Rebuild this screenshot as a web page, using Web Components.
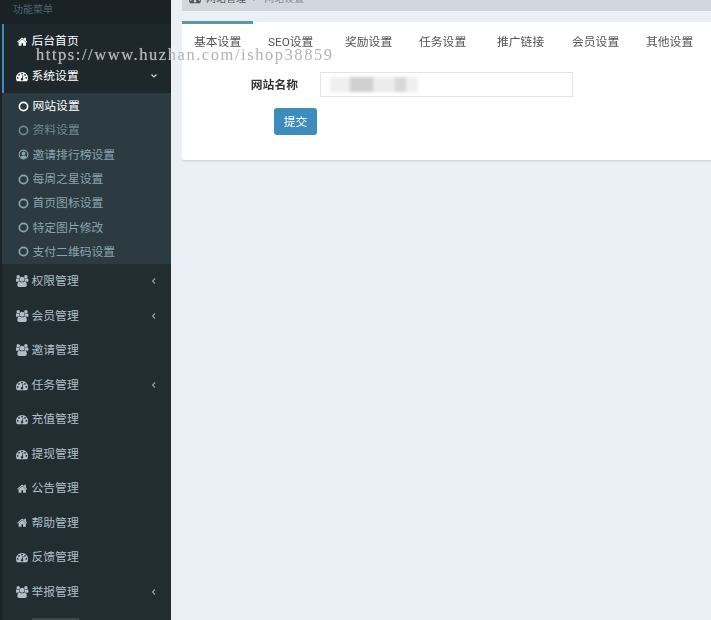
<!DOCTYPE html>
<html lang="zh"><head><meta charset="utf-8"><title>网站设置</title>
<style>
html,body{margin:0;height:620px;overflow:hidden;background:#ebeff6}
body{font:11.8px/16px Roboto,"Noto Sans CJK SC",sans-serif}
</style></head><body>
<x-app>
  <x-sidebar slot="side">
    <x-side-head>功能菜单</x-side-head>
    <x-side-item icon="home" active>后台首页</x-side-item>
    <x-side-item icon="gauge" active open chev="down">系统设置</x-side-item>
    <x-sub-menu>
      <x-sub-item on>网站设置</x-sub-item>
      <x-sub-item dim>资料设置</x-sub-item>
      <x-sub-item icon="user">邀请排行榜设置</x-sub-item>
      <x-sub-item>每周之星设置</x-sub-item>
      <x-sub-item>首页图标设置</x-sub-item>
      <x-sub-item>特定图片修改</x-sub-item>
      <x-sub-item>支付二维码设置</x-sub-item>
    </x-sub-menu>
    <x-side-item icon="users" chev="left">权限管理</x-side-item>
    <x-side-item icon="users" chev="left">会员管理</x-side-item>
    <x-side-item icon="users">邀请管理</x-side-item>
    <x-side-item icon="gauge" chev="left">任务管理</x-side-item>
    <x-side-item icon="gauge">充值管理</x-side-item>
    <x-side-item icon="gauge">提现管理</x-side-item>
    <x-side-item icon="home">公告管理</x-side-item>
    <x-side-item icon="home">帮助管理</x-side-item>
    <x-side-item icon="gauge">反馈管理</x-side-item>
    <x-side-item icon="users" chev="left">举报管理</x-side-item>
    <x-side-item icon="users" chev="left"></x-side-item>
  </x-sidebar>
  <x-crumb slot="main"></x-crumb>
  <x-card slot="main">
    <x-tabs></x-tabs>
    <x-form-row label="网站名称"></x-form-row>
    <x-button>提交</x-button>
  </x-card>
  <x-watermark slot="over">https://www.huzhan.com/ishop38859</x-watermark>
</x-app>
<script>
const ICONS={
home:['0 0 1664 1792','<path d="M1408 992v480q0 26-19 45t-45 19h-384v-384h-256v384h-384q-26 0-45-19t-19-45v-480q0-1 .5-3t.5-3l575-474 575 474q1 2 1 6zm223-69l-62 74q-8 9-21 11h-3q-13 0-21-7l-692-577-692 577q-12 8-24 7-13-2-21-11l-62-74q-8-10-7-23.500t11-21.500l719-599q32-26 76-26t76 26l244 204v-195q0-14 9-23t23-9h192q14 0 23 9t9 23v408l219 182q10 8 11 21.500t-7 23.500z"/>'],
gauge:['0 0 1792 1792','<path d="M384 1184q0-53-37.500-90.500t-90.500-37.500-90.500 37.500-37.500 90.500 37.500 90.500 90.500 37.500 90.500-37.500 37.500-90.500zm192-448q0-53-37.500-90.500t-90.500-37.500-90.500 37.500-37.500 90.500 37.500 90.500 90.500 37.500 90.500-37.500 37.500-90.500zm428 481l101-382q6-26-7.500-48.500t-38.500-29.500-48 6.500-30 39.500l-101 382q-60 5-107 43.500t-63 98.500q-20 77 20 146t117 89 146-20 89-117q16-60-6-117t-72-91zm660-33q0-53-37.500-90.500t-90.500-37.500-90.500 37.500-37.500 90.500 37.500 90.500 90.500 37.500 90.500-37.500 37.500-90.500zm-640-640q0-53-37.500-90.500t-90.500-37.500-90.500 37.500-37.500 90.500 37.500 90.500 90.500 37.500 90.500-37.500 37.500-90.500zm448 192q0-53-37.500-90.500t-90.500-37.500-90.500 37.500-37.500 90.500 37.500 90.500 90.500 37.500 90.500-37.500 37.500-90.500zm320 448q0 261-141 483-19 29-54 29h-1402q-35 0-54-29-141-221-141-483 0-182 71-348t191-286 286-191 348-71 348 71 286 191 191 286 71 348z"/>'],
users:['0 0 1920 1792','<path d="M529 896q-162 5-265 128h-134q-82 0-138-40.500t-56-118.500q0-353 124-353 6 0 43.500 21t97.500 42.500 119 21.500q67 0 133-23-5 37-5 66 0 139 81 256zm1071 637q0 120-73 189.500t-194 69.500h-874q-121 0-194-69.500t-73-189.500q0-53 3.500-103.500t14-109 26.500-108.500 43-97.500 62-81 85.500-53.500 111.500-20q10 0 43 21.500t73 48 107 48 135 21.500 135-21.500 107-48 73-48 43-21.500q61 0 111.500 20t85.500 53.500 62 81 43 97.500 26.500 108.500 14 109 3.500 103.500zm-1024-1277q0 106-75 181t-181 75-181-75-75-181 75-181 181-75 181 75 75 181zm704 384q0 159-112.500 271.500t-271.500 112.500-271.500-112.500-112.500-271.500 112.500-271.500 271.500-112.500 271.500 112.500 112.500 271.500zm576 225q0 78-56 118.500t-138 40.500h-134q-103-123-265-128 81-117 81-256 0-29-5-66 66 23 133 23 59 0 119-21.500t97.500-42.500 43.500-21q124 0 124 353zm-128-609q0 106-75 181t-181 75-181-75-75-181 75-181 181-75 181 75 75 181z"/>'],
ring:['0 0 12 12','<circle cx="6" cy="6" r="4.5" fill="none" stroke="currentColor" stroke-width="1.800"/>'],
user:['0 0 12 12','<circle cx="6" cy="6" r="4.7" fill="none" stroke="currentColor" stroke-width="1.300"/><circle cx="6" cy="4.800" r="2" fill="currentColor"/><path d="M2.600 9.200c.7-1.700 2-2.200 3.400-2.200s2.700.5 3.400 2.200L6 10.600z" fill="currentColor"/>']
};
const svg=(n,w,h)=>`<svg width="${w}" height="${h}" viewBox="${ICONS[n][0]}" fill="currentColor" aria-hidden="true">${ICONS[n][1]}</svg>`;
function el(name,css,html){
  customElements.define(name,class extends HTMLElement{
    connectedCallback(){
      if(this.shadowRoot)return;
      const r=this.attachShadow({mode:'open'});
      r.innerHTML=`<style>${css}</style>${typeof html==='function'?html(this):html}`;
    }
  });
}
el('x-app',`:host{display:block;position:relative;width:711px;height:620px;overflow:hidden;filter:blur(.45px)}
.l{display:flex;height:620px}
.m{flex:1;min-width:0;padding-left:11px;display:flex;flex-direction:column}`,
`<div class="l"><slot name="side"></slot><div class="m"><slot name="main"></slot></div></div><slot name="over"></slot>`);
el('x-sidebar',`:host{display:block;box-sizing:border-box;width:171px;height:620px;overflow:hidden;background:#222d32;border-left:2px solid #1b2327;color:#b8c7ce}`,`<slot></slot>`);
el('x-side-head',`:host{display:block;height:24px;box-sizing:border-box;padding:2px 0 0 11px;background:#1a2226;color:#4b646f;font-size:10px;line-height:16px}`,`<slot></slot>`);
el('x-side-item',`:host{display:flex;align-items:center;box-sizing:border-box;height:34.5px;padding-left:10px;color:#b0bfc6;border-left:2px solid transparent}
:host([active]){background:#1e282c;color:#fff;border-left-color:#3c8dbc}
.i{width:17px;flex:none;display:flex;justify-content:center;margin-left:0;padding-right:1px;box-sizing:border-box}
.t{flex:1;padding-left:.5px}
.c{width:8px;margin-right:13px;display:flex;justify-content:center;opacity:.8}
.c svg{display:block}
.bar{display:block;width:47px;height:16px;margin-top:-1px;background:rgba(184,199,206,.18)}`,
h=>{
 const n=h.getAttribute('icon'),c=h.getAttribute('chev');
 const dims=n==='users'?[13,12]:n==='gauge'?[12,12]:[10.500,11.500];
 const ch=c==='down'?'<path d="M1.500 2.500l2.500 2.500 2.500-2.500" fill="none" stroke="currentColor" stroke-width="1.100"/>':c==='left'?'<path d="M5 1.500L2.500 4 5 6.500" fill="none" stroke="currentColor" stroke-width="1.100"/>':'';
 const body=h.textContent.trim()?'<slot></slot>':'<span class="bar"></span>';
 return `<span class="i">${svg(n,dims[0],dims[1])}</span><span class="t">${body}</span><span class="c">${ch?`<svg width="8" height="8" viewBox="0 0 8 8">${ch}</svg>`:''}</span>`;
});
el('x-sub-menu',`:host{display:block;background:#2c3b41;padding-top:1px}`,`<slot></slot>`);
el('x-sub-item',`:host{display:flex;align-items:center;gap:4px;height:24.3px;box-sizing:border-box;padding-left:15.500px;color:#8aa4af}
:host([on]){color:#fff}
:host([dim]){color:#6f8791}
svg{flex:none;display:block}`,
h=>`${svg(h.getAttribute('icon')||'ring',11,11)}<slot></slot>`);
el('x-crumb',`:host{display:flex;align-items:flex-end;flex:none;gap:4px;height:11px;box-sizing:border-box;background:#d2d6de;padding:0 0 4.500px 7px;color:#555;overflow:hidden;font-size:10px}
svg{flex:none;margin-bottom:2.500px;margin-right:1px}
.s{color:#8a8f99;margin:0 2.500px}.e{color:#8a8f99}`,
()=>`${svg('gauge',12,12)}<span>网站管理</span><span class="s">&gt;</span><span class="e">网站设置</span>`);
el('x-card',`:host{display:block;box-sizing:border-box;height:139px;margin-top:11px;position:relative;background:#fff;border-top:1px solid #fff;border-bottom:1px solid #d2d6de;border-radius:3px 0 0 3px;box-shadow:0 1px 1px rgba(0,0,0,.05)}`,`<slot></slot>`);
el('x-tabs',`:host{display:flex;height:37px;color:#555;margin-top:-2px}
.t{box-sizing:border-box;height:37px;padding-top:10px;border-top:3px solid transparent;flex:none;white-space:nowrap}
.t.a{width:71px;padding-left:12px;margin-right:15px;border-top-color:#5c93ad}`,
()=>{
 const T=[['基本设置',71],['SEO设置',77],['奖励设置',74],['任务设置',78],['推广链接',75],['会员设置',74],['其他设置',50]];
 return T.map(([t,w],i)=>`<div class="t${i?'':' a'}"${i?` style="width:${w}px"`:''}>${t}</div>`).join('');
});
el('x-form-row',`:host{display:grid;grid-template-columns:116px 253px;column-gap:22px;align-items:center;margin-top:14px}
label{text-align:right;font-weight:700;color:#333}
.b{box-sizing:border-box;height:25px;border:1px solid #e2e4e6;background:#fff;position:relative;overflow:hidden}
.p{position:absolute;left:9px;top:4px;width:88px;height:15px;filter:blur(1.5px);background:linear-gradient(90deg,#efefef 0 20px,#cfcfcf 20px 43px,#ececec 43px 65px,#d8d8d8 65px 76px,#efefef 76px 88px)}`,
h=>`<label>${h.getAttribute('label')}</label><div class="b"><div class="p"></div></div>`);
el('x-button',`:host{display:flex;align-items:center;justify-content:center;box-sizing:border-box;width:43px;height:27px;margin:11px 0 0 92px;background:#3c8dbc;border-radius:3px;color:#fff}`,`<slot></slot>`);
el('x-watermark',`:host{position:absolute;left:36px;top:45px;font:16.500px/20px "Liberation Serif",serif;letter-spacing:1.550px;color:#b4b4b4;white-space:nowrap;text-shadow:0 0 1px rgba(255,255,255,.5)}`,`<slot></slot>`);
</script>
</body></html>
